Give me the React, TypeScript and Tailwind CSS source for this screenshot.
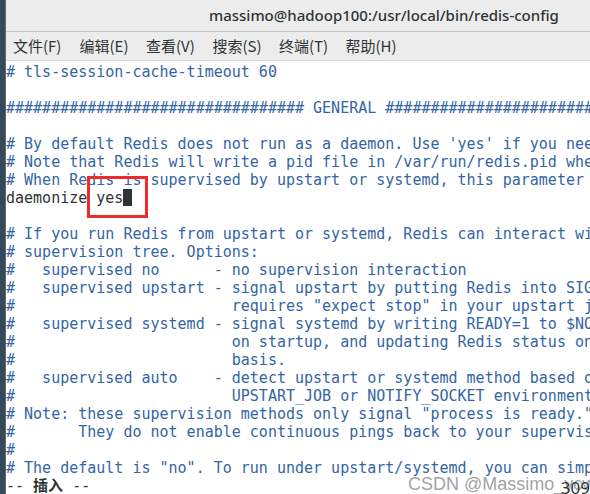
const lines: string[] = [
  '# tls-session-cache-timeout 60',
  '',
  '################################# GENERAL #####################################',
  '',
  "# By default Redis does not run as a daemon. Use 'yes' if you need it.",
  '# Note that Redis will write a pid file in /var/run/redis.pid when daemonized.',
  '# When Redis is supervised by upstart or systemd, this parameter has no impact.',
  'daemonize yes',
  '',
  '# If you run Redis from upstart or systemd, Redis can interact with your',
  '# supervision tree. Options:',
  '#   supervised no      - no supervision interaction',
  '#   supervised upstart - signal upstart by putting Redis into SIGSTOP mode',
  '#                        requires "expect stop" in your upstart job config',
  '#   supervised systemd - signal systemd by writing READY=1 to $NOTIFY_SOCKET',
  '#                        on startup, and updating Redis status on a regular',
  '#                        basis.',
  '#   supervised auto    - detect upstart or systemd method based on',
  '#                        UPSTART_JOB or NOTIFY_SOCKET environment variables',
  '# Note: these supervision methods only signal "process is ready."',
  '#       They do not enable continuous pings back to your supervisor.',
  '#',
  '# The default is "no". To run under upstart/systemd, you can simply uncomment',
];

const menus = ['文件(F)', '编辑(E)', '查看(V)', '搜索(S)', '终端(T)', '帮助(H)'];

const mono = { fontFamily: '"DejaVu Sans Mono", "Noto Sans CJK SC", monospace' };

export default function App() {
  return (
    <div className="w-[590px] h-[494px] flex overflow-hidden bg-white">
      <div className="w-[6px] shrink-0 bg-[#35495a] border-r border-[#5b6b78]" />
      <div className="flex-1 flex flex-col min-w-0">
        <div className="h-[32px] shrink-0 bg-[#ececec] border-b border-[#c4c4c4] flex items-center pl-[203px] font-['Noto_Sans','Noto_Sans_CJK_SC',sans-serif] text-[15px] font-medium text-[#2e3436] whitespace-nowrap">
          massimo@hadoop100:/usr/local/bin/redis-config
        </div>
        <div className="h-[29px] shrink-0 bg-[#ececec] border-b border-[#d6d6d6] flex items-center pl-[7px] gap-[15.5px] font-['Noto_Sans_CJK_SC',sans-serif] text-[15px] text-[#2e3436] whitespace-nowrap">
          {menus.map((m) => (
            <span key={m} className="w-[51px]">{m}</span>
          ))}
        </div>
        <div className="relative flex-1 overflow-hidden pt-[2px] text-[15px] leading-[18px]" style={mono}>
          {lines.map((l, i) =>
            l === 'daemonize yes' ? (
              <div key={i} className="h-[18px] whitespace-pre text-[#2e3436] flex">
                <span>daemonize yes</span>
                <span className="inline-block w-[9px] h-[17px] bg-[#2e3436]" />
              </div>
            ) : (
              <div key={i} className="h-[18px] whitespace-pre text-[#3465a4]">
                {l || ' '}
              </div>
            )
          )}
          <div className="h-[18px] whitespace-pre text-[#2e3436]">
            -- <span className="font-bold">插入</span> --
          </div>
          <div className="absolute left-[81px] top-[115px] w-[61px] h-[42px] border-[3px] border-[#ee2b2b]" />
          <div className="absolute left-[402px] bottom-[1px] text-[#8a8a8a]/80 text-[18px] font-['Liberation_Sans',sans-serif] whitespace-nowrap">
            CSDN @Massimo_ycw
          </div>
          <div className="absolute right-[0px] bottom-[-3px] text-[#2e3436] text-[17px] font-['Noto_Sans',sans-serif]">309</div>
        </div>
      </div>
    </div>
  );
}
